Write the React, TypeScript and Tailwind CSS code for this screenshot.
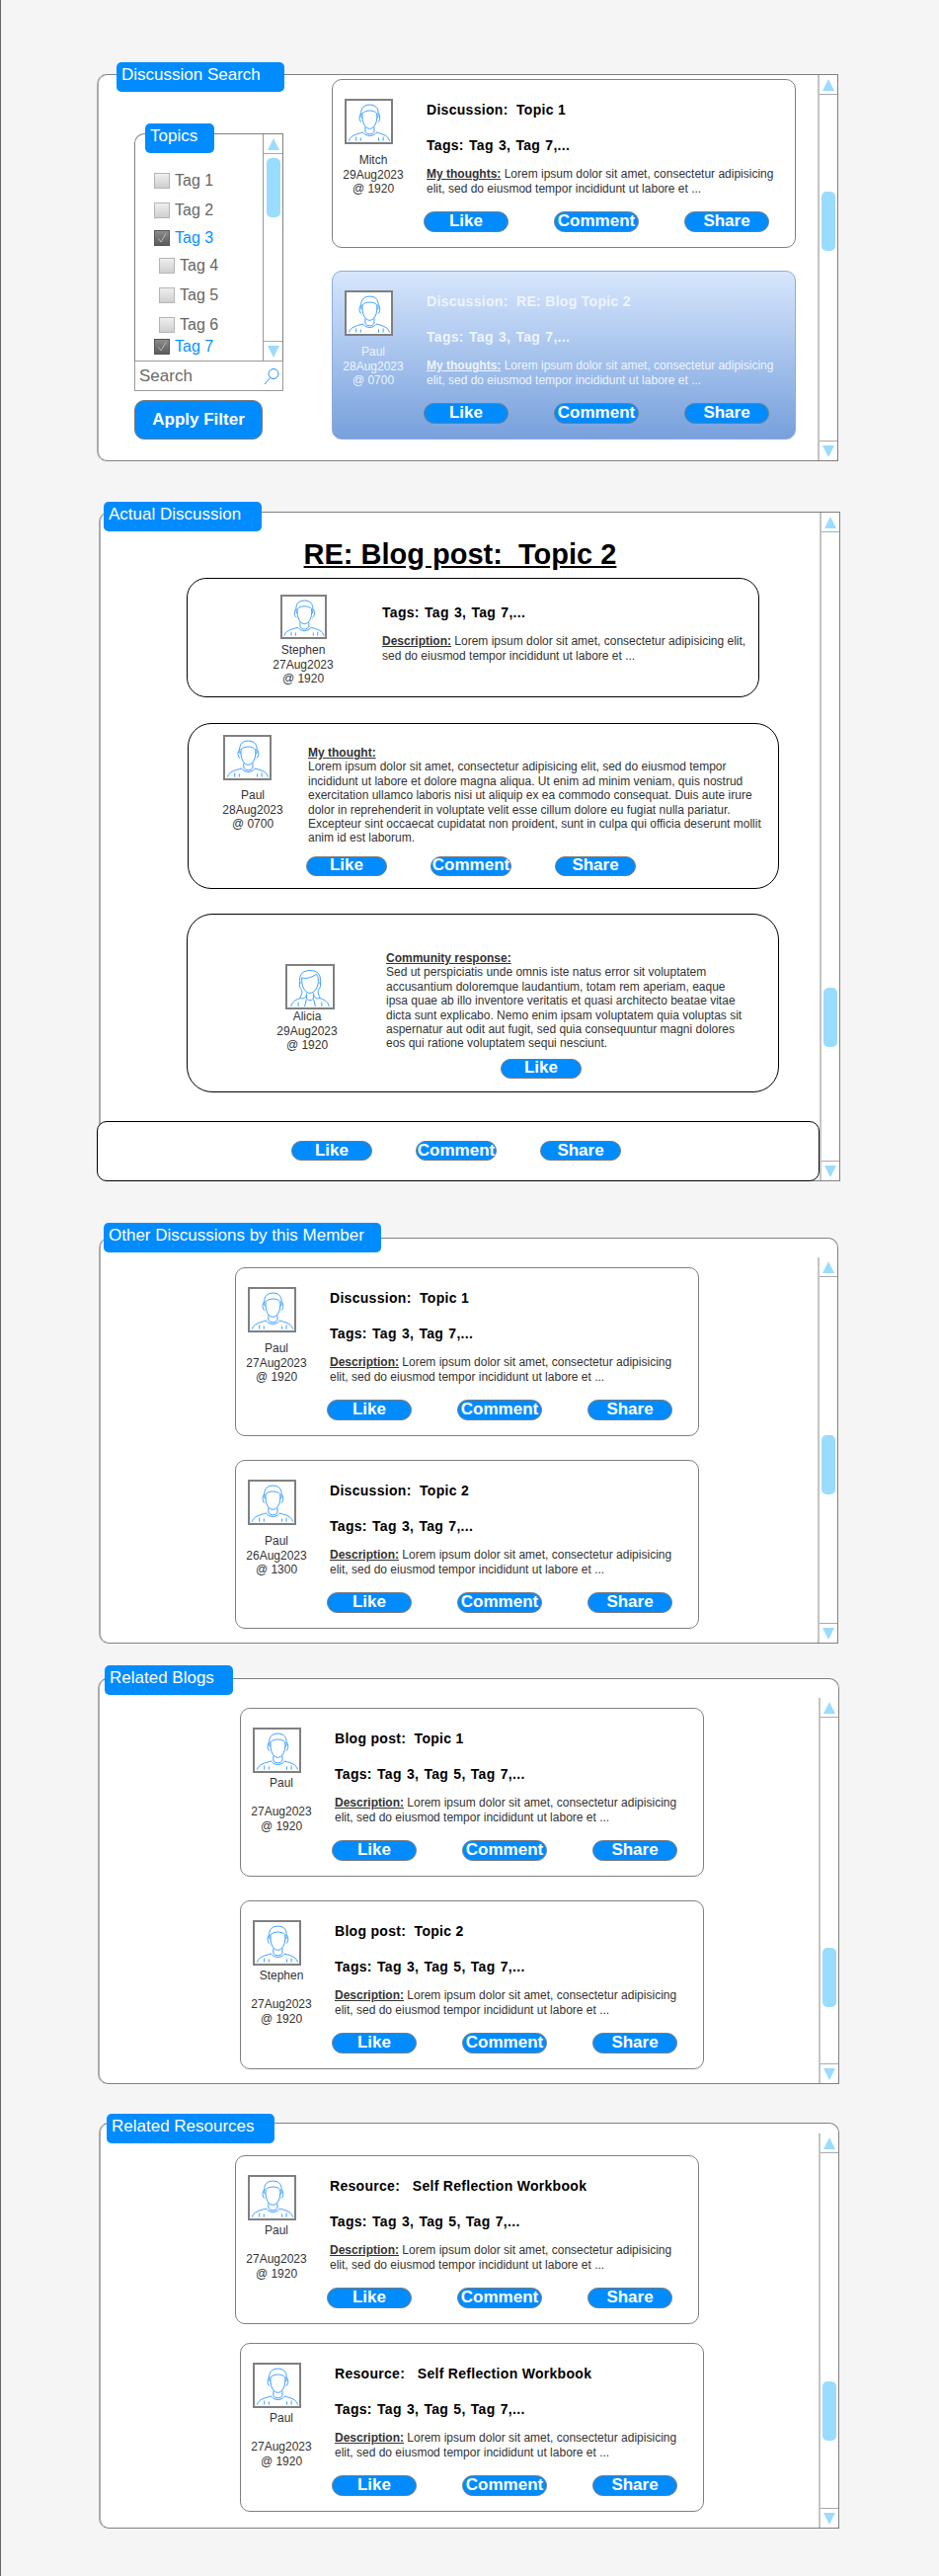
import React from "react";

const MaleAvatar = () => (
  <svg viewBox="0 0 48 46" className="w-full h-full" fill="none" stroke="#2b95ff" strokeWidth="1">
    <path d="M16 19C14 10 17 4.500 25 4.500C33 4.500 36 10 34 19" />
    <path d="M17 14C20 10 30 10 33 14" />
    <path d="M17 14C16 24 20 31 25 31C30 31 34 24 33 14" />
    <path d="M15.500 14C13 16 13 22 16 24M34.500 14C37 16 37 22 34 24" />
    <path d="M20 29V34C21 38 29 38 30 34V29" />
    <path d="M18 35.500C21 40 29 40 32 35.500" />
    <path d="M2 44.500C3 39 10 37 18 35M32 35C40 37 46 39 47 44.500" />
    <path d="M10 44.500V40M15 44.500V41M35 44.500V41M40 44.500V40" />
  </svg>
);

const FemaleAvatar = () => (
  <svg viewBox="0 0 50 46" className="w-full h-full" fill="none" stroke="#2b95ff" strokeWidth="1">
    <path d="M14 20C12 9 17 5 25 5C33 5 38 9 36 20" />
    <path d="M16 13C21 15 28 12 32 9C33 11 34 12 34 14" />
    <path d="M16 13C15 23 20 30 25 30C30 30 35 23 34 14" />
    <path d="M14 18C12 22 15 25 16 28C17 31 14 33 14 35C16 37 19 36 21 33" />
    <path d="M36 18C38 22 35 25 34 28C33 31 36 33 36 35C34 37 31 36 29 33" />
    <path d="M21 30V35C22 39 28 39 29 35V30" />
    <path d="M4 45C5 39 10 37 15 35.500M35 35.500C40 37 45 39 46 45" />
    <path d="M12 45V40M38 45V40M19 45L21 37M31 45L29 37" />
  </svg>
);

const Avatar = ({ female = false, className }: { female?: boolean; className: string }) => (
  <div className={`border-2 border-[#808080] bg-white overflow-hidden ${className}`}>
    {female ? <FemaleAvatar /> : <MaleAvatar />}
  </div>
);

const Triangle = ({ down = false }: { down?: boolean }) => (
  <svg viewBox="0 0 12 12" className="w-3 h-3" fill="#9adcff">
    <path d={down ? "M0 0H12L6 12Z" : "M6 0L12 12H0Z"} />
  </svg>
);

const Scrollbar = ({ thumb, className = "" }: { thumb: string; className?: string }) => (
  <div className={`w-5 shrink-0 flex flex-col border-l-2 border-[#c4c4c4] bg-white ${className}`}>
    <div className="h-5 border-b border-[#aaaaaa] flex items-center justify-center"><Triangle /></div>
    <div className="flex-1">
      <div className={`w-[14px] h-[60px] mx-auto rounded-[5px] bg-[#9adcff] ${thumb}`} />
    </div>
    <div className="h-5 border-t border-[#aaaaaa] flex items-center justify-center"><Triangle down /></div>
  </div>
);

const Btn = ({ label, small = false }: { label: string; small?: boolean }) => (
  <div className={`${small ? "w-[82px] h-5" : "w-[86px] h-[21px]"} shrink-0 rounded-full bg-[#008cff] border border-[#7a7a7a] flex items-center justify-center text-white font-bold text-[17px] leading-none whitespace-nowrap pb-[2px]`}>
    {label}
  </div>
);

const Tab = ({ title, className }: { title: string; className: string }) => (
  <div className={`absolute h-[30px] bg-[#008cff] rounded-[5px] text-white text-[17px] leading-[26px] pl-[5px] whitespace-nowrap ${className}`}>
    {title}
  </div>
);

const Section = ({ className, children }: { className: string; children: React.ReactNode }) => (
  <section className={`relative flex bg-white border border-[#808080] border-l-2 border-l-[#aaaaaa] rounded-l-[10px] ${className}`}>
    {children}
  </section>
);

const Meta = ({ name, date, time, className }: { name: string; date: string; time: string; className: string }) => (
  <div className={`text-center text-[12px] leading-[14.5px] text-[#333] whitespace-nowrap ${className}`}>
    <div>{name}</div>
    <div>{date}</div>
    <div>{time}</div>
  </div>
);

const Label = ({ children }: { children: React.ReactNode }) => (
  <span className="font-bold underline">{children}</span>
);

type CardProps = {
  title: string;
  tags: string;
  label: string;
  name: string;
  date: string;
  time?: string;
  spaced?: boolean;
  active?: boolean;
  className?: string;
};

const SmallCard = ({ title, tags, label, name, date, time = "@ 1920", spaced = false, active = false, className = "" }: CardProps) => (
  <div className={`w-[470px] h-[171px] rounded-[10px] border flex shrink-0 ${active ? "bg-gradient-to-b from-[#d7e6fc] to-[#77a0dc] border-[#8fabd9] text-[#eef4fd]" : "bg-white border-[#808080] text-[#333]"} ${className}`}>
    <div className="w-[95px] shrink-0 pt-[19px]">
      <Avatar className="w-[49px] h-[46px] ml-[12px]" />
      {spaced ? (
        <div className="w-[82px] text-center text-[12px] leading-[14.5px] whitespace-nowrap mt-[3px]">
          <div>{name}</div>
          <div className="mt-[14.500px]">{date}</div>
          <div>{time}</div>
        </div>
      ) : (
        <div className="w-[82px] text-center text-[12px] leading-[14.5px] whitespace-nowrap mt-[9px]">
          <div>{name}</div>
          <div>{date}</div>
          <div>{time}</div>
        </div>
      )}
    </div>
    <div className="pt-[22px] min-w-0">
      <div className={`font-bold text-[14px] leading-[16px] tracking-[0.3px] whitespace-pre ${active ? "" : "text-black"}`}>{title}</div>
      <div className={`font-bold text-[14px] leading-[16px] tracking-[0.3px] [word-spacing:1px] mt-[20px] whitespace-pre ${active ? "" : "text-black"}`}>{tags}</div>
      <div className="mt-[14px] text-[12px] leading-[15px] whitespace-nowrap">
        <Label>{label}</Label> Lorem ipsum dolor sit amet, consectetur adipisicing
        <br />
        elit, sed do eiusmod tempor incididunt ut labore et ...
      </div>
      <div className="flex gap-[46px] mt-[15px] -ml-[3px]">
        <Btn label="Like" />
        <Btn label="Comment" />
        <Btn label="Share" />
      </div>
    </div>
  </div>
);

const tagRows = [
  { t: "Tag 1", row: "mt-[19px] ml-[19px]", on: false },
  { t: "Tag 2", row: "mt-[14px] ml-[19px]", on: false },
  { t: "Tag 3", row: "mt-[12px] ml-[19px]", on: true },
  { t: "Tag 4", row: "mt-[12px] ml-[24px]", on: false },
  { t: "Tag 5", row: "mt-[14px] ml-[24px]", on: false },
  { t: "Tag 6", row: "mt-[14px] ml-[24px]", on: false },
  { t: "Tag 7", row: "mt-[6px] ml-[19px]", on: true },
];

const Checkbox = ({ on }: { on: boolean }) => (
  <div className={`w-4 h-4 shrink-0 border flex items-center justify-center ${on ? "border-[#555] bg-gradient-to-b from-[#8c8c8c] to-[#5c5c5c]" : "border-[#b5b5b5] bg-gradient-to-b from-[#efefef] to-[#cfcfcf]"}`}>
    {on && (
      <svg viewBox="0 0 12 12" className="w-3 h-3" fill="none" stroke="#c8c8c8" strokeWidth="0.8">
        <path d="M2.500 6.500L5 10L10 1.500" />
      </svg>
    )}
  </div>
);

const TopicList = () => (
  <div className="relative w-[151px] h-[261px] flex flex-col">
    <Tab title="Topics" className="-top-[10px] left-[11px] w-[70px]" />
    <div className="h-[231px] flex border border-[#808080] border-b-0 rounded-tl-[10px] bg-white">
      <div className="flex-1 pt-[20px]">
        {tagRows.map((r) => (
          <div key={r.t} className={`flex items-center gap-[5px] h-[16px] text-[16px] leading-[16px] ${r.row} ${r.on ? "text-[#0a90ff]" : "text-[#666]"}`}>
            <Checkbox on={r.on} />
            <span>{r.t}</span>
          </div>
        ))}
      </div>
      <div className="w-5 shrink-0 flex flex-col border-l border-[#999]">
        <div className="h-5 border-b border-[#aaaaaa] flex items-center justify-center"><Triangle /></div>
        <div className="flex-1 pt-[4px]">
          <div className="w-[14px] h-[60px] mx-auto rounded-[5px] bg-[#9adcff]" />
        </div>
        <div className="h-5 border-t border-[#aaaaaa] flex items-center justify-center"><Triangle down /></div>
      </div>
    </div>
    <div className="h-[31px] shrink-0 flex items-center justify-between border border-[#999] bg-white pl-[4px] pr-[3px] text-[17px] text-[#6a6a6a]">
      <span>Search</span>
      <svg viewBox="0 0 16 18" className="w-4 h-[18px]" fill="none" stroke="#1e90ff" strokeWidth="1">
        <circle cx="10" cy="6.500" r="5" />
        <path d="M6.500 10.500L1 17" />
      </svg>
    </div>
  </div>
);

const thought = [
  "Lorem ipsum dolor sit amet, consectetur adipisicing elit, sed do eiusmod tempor",
  "incididunt ut labore et dolore magna aliqua. Ut enim ad minim veniam, quis nostrud",
  "exercitation ullamco laboris nisi ut aliquip ex ea commodo consequat. Duis aute irure",
  "dolor in reprehenderit in voluptate velit esse cillum dolore eu fugiat nulla pariatur.",
  "Excepteur sint occaecat cupidatat non proident, sunt in culpa qui officia deserunt mollit",
  "anim id est laborum.",
];

const community = [
  "Sed ut perspiciatis unde omnis iste natus error sit voluptatem",
  "accusantium doloremque laudantium, totam rem aperiam, eaque",
  "ipsa quae ab illo inventore veritatis et quasi architecto beatae vitae",
  "dicta sunt explicabo. Nemo enim ipsam voluptatem quia voluptas sit",
  "aspernatur aut odit aut fugit, sed quia consequuntur magni dolores",
  "eos qui ratione voluptatem sequi nesciunt.",
];

export default function App() {
  return (
    <div className="min-h-[2608px] bg-[#f5f5f5] border-l border-[#666] pt-[75px] flex flex-col items-start font-['Liberation_Sans',Arial,sans-serif]">
      {/* Discussion Search */}
      <Section className="ml-[97px] w-[751px] h-[392px]">
        <Tab title="Discussion Search" className="-top-[13px] left-[18px] w-[170px]" />
        <div className="w-[236px] shrink-0 pl-[36px] pt-[59px]">
          <TopicList />
          <div className="mt-[9px] w-[130px] h-[40px] rounded-[10px] bg-[#008cff] border border-[#7a7a7a] flex items-center justify-center text-white font-bold text-[17px]">
            Apply Filter
          </div>
        </div>
        <div className="flex-1 pt-[4px] flex flex-col gap-[23px]">
          <SmallCard title="Discussion:  Topic 1" tags="Tags: Tag 3, Tag 7,..." label="My thoughts:" name="Mitch" date="29Aug2023" />
          <SmallCard active title="Discussion:  RE: Blog Topic 2" tags="Tags: Tag 3, Tag 7,..." label="My thoughts:" name="Paul" date="28Aug2023" time="@ 0700" />
        </div>
        <Scrollbar thumb="mt-[98px]" />
      </Section>

      {/* Actual Discussion */}
      <Section className="ml-[99px] mt-[51px] w-[751px] h-[678px]">
        <Tab title="Actual Discussion" className="-top-[11px] left-[3px] w-[160px]" />
        <div className="flex-1 min-w-0 pt-[24px]">
          <h1 className="text-center font-bold underline text-[29px] leading-[36px] text-black whitespace-pre">RE: Blog post:  Topic 2</h1>
          <div className="mt-[6px] ml-[87px] w-[580px] h-[121px] border border-black rounded-[20px] flex">
            <div className="ml-[71px] w-[92px] pt-[16px] shrink-0">
              <Avatar className="w-[47px] h-[45px] ml-[23px]" />
              <Meta name="Stephen" date="27Aug2023" time="@ 1920" className="mt-[4px]" />
            </div>
            <div className="ml-[34px] pt-[26px]">
              <div className="font-bold text-[14px] leading-[16px] tracking-[0.3px] [word-spacing:1px] text-black whitespace-pre">Tags: Tag 3, Tag 7,...</div>
              <div className="mt-[14px] text-[12px] leading-[15px] text-[#333] whitespace-nowrap">
                <Label>Description:</Label> Lorem ipsum dolor sit amet, consectetur adipisicing elit,
                <br />
                sed do eiusmod tempor incididunt ut labore et ...
              </div>
            </div>
          </div>
          <div className="mt-[26px] ml-[88px] w-[599px] h-[168px] border border-black rounded-[24px] flex">
            <div className="ml-[19px] w-[92px] pt-[11px] shrink-0">
              <Avatar className="w-[49px] h-[46px] ml-[16px]" />
              <Meta name="Paul" date="28Aug2023" time="@ 0700" className="mt-[8px]" />
            </div>
            <div className="ml-[10px] pt-[22px] text-[12px] leading-[14.4px] text-[#333] whitespace-nowrap">
              <Label>My thought:</Label>
              {thought.map((l) => (
                <div key={l}>{l}</div>
              ))}
              <div className="flex gap-[44px] mt-[11px] -ml-[2px]">
                <Btn small label="Like" />
                <Btn small label="Comment" />
                <Btn small label="Share" />
              </div>
            </div>
          </div>
          <div className="mt-[25px] ml-[87px] w-[600px] h-[181px] border border-black rounded-[26px] flex">
            <div className="ml-[75px] w-[92px] pt-[50px] shrink-0">
              <Avatar female className="w-[50px] h-[46px] ml-[24px]" />
              <Meta name="Alicia" date="29Aug2023" time="@ 1920" className="mt-0" />
            </div>
            <div className="ml-[34px] pt-[37px] text-[12px] leading-[14.4px] text-[#333] whitespace-nowrap">
              <Label>Community response:</Label>
              {community.map((l) => (
                <div key={l}>{l}</div>
              ))}
              <div className="mt-[8px] ml-[116px]">
                <Btn small label="Like" />
              </div>
            </div>
          </div>
          <div className="mt-[29px] -ml-[4px] w-[732px] h-[61px] border border-black rounded-[10px] bg-white flex items-start pt-[19px] pl-[196px] gap-[44px]">
            <Btn small label="Like" />
            <Btn small label="Comment" />
            <Btn small label="Share" />
          </div>
        </div>
        <Scrollbar thumb="mt-[461px]" />
      </Section>

      {/* Other Discussions */}
      <Section className="ml-[99px] mt-[57px] w-[749px] h-[411px] rounded-tr-[10px]">
        <Tab title="Other Discussions by this Member" className="-top-[16px] left-[3px] w-[281px]" />
        <div className="flex-1 pt-[29px] pl-[136px] flex flex-col gap-[24px]">
          <SmallCard title="Discussion:  Topic 1" tags="Tags: Tag 3, Tag 7,..." label="Description:" name="Paul" date="27Aug2023" />
          <SmallCard title="Discussion:  Topic 2" tags="Tags: Tag 3, Tag 7,..." label="Description:" name="Paul" date="26Aug2023" time="@ 1300" />
        </div>
        <Scrollbar className="mt-[19px]" thumb="mt-[160px]" />
      </Section>

      {/* Related Blogs */}
      <Section className="ml-[98px] mt-[35px] w-[751px] h-[411px] rounded-tr-[10px]">
        <Tab title="Related Blogs" className="-top-[14px] left-[5px] w-[130px]" />
        <div className="flex-1 pt-[29px] pl-[142px] flex flex-col gap-[24px]">
          <SmallCard spaced title="Blog post:  Topic 1" tags="Tags: Tag 3, Tag 5, Tag 7,..." label="Description:" name="Paul" date="27Aug2023" />
          <SmallCard spaced title="Blog post:  Topic 2" tags="Tags: Tag 3, Tag 5, Tag 7,..." label="Description:" name="Stephen" date="27Aug2023" />
        </div>
        <Scrollbar className="mt-[19px]" thumb="mt-[233px]" />
      </Section>

      {/* Related Resources */}
      <Section className="ml-[99px] mt-[39px] w-[750px] h-[411px] rounded-tr-[10px]">
        <Tab title="Related Resources" className="-top-[10px] left-[6px] w-[170px]" />
        <div className="flex-1 pt-[32px] pl-[136px] flex flex-col gap-[19px]">
          <SmallCard spaced title="Resource:   Self Reflection Workbook" tags="Tags: Tag 3, Tag 5, Tag 7,..." label="Description:" name="Paul" date="27Aug2023" />
          <SmallCard spaced className="ml-[5px]" title="Resource:   Self Reflection Workbook" tags="Tags: Tag 3, Tag 5, Tag 7,..." label="Description:" name="Paul" date="27Aug2023" />
        </div>
        <Scrollbar className="mt-[10px]" thumb="mt-[231px]" />
      </Section>
    </div>
  );
}
